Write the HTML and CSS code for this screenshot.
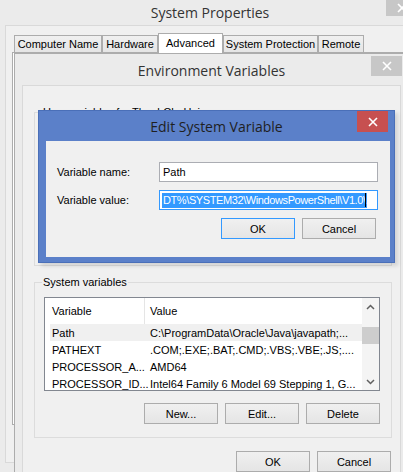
FILE: index.html
```html
<!DOCTYPE html>
<html>
<head>
<meta charset="utf-8">
<link rel="stylesheet" href="styles.css">
</head>
<body>
<div class="win sys">
  <div class="titlebar sys-tb">
    <span class="title">System Properties</span>
    <span class="closebtn sys-close"><svg width="10" height="10" viewBox="0 0 10 10"><path d="M1 1L9 9M9 1L1 9" stroke="#fff" stroke-width="1.6" fill="none"/></svg></span>
  </div>
  <div class="sys-client">
    <div class="tabs">
      <div class="tab tw1">Computer Name</div>
      <div class="tab tw2">Hardware</div>
      <div class="tab tw3 sel">Advanced</div>
      <div class="tab tw4">System Protection</div>
      <div class="tab tw5">Remote</div>
    </div>
    <div class="tabpage"></div>
  </div>
</div>

<div class="win env">
  <div class="titlebar env-tb">
    <span class="title">Environment Variables</span>
    <span class="closebtn env-close"><svg width="10" height="10" viewBox="0 0 10 10"><path d="M1 1L9 9M9 1L1 9" stroke="#fff" stroke-width="1.6" fill="none"/></svg></span>
  </div>
  <div class="env-client">
    <fieldset class="group user-group"><legend>User variables for ThanhChuHai</legend></fieldset>
    <fieldset class="group sys-group"><legend>System variables</legend>
      <div class="listview">
        <div class="lv-main">
          <div class="lv-head"><div class="c1">Variable</div><div class="c2">Value</div></div>
          <div class="lv-row hl"><div class="c1">Path</div><div class="c2">C:\ProgramData\Oracle\Java\javapath;...</div></div>
          <div class="lv-row"><div class="c1">PATHEXT</div><div class="c2">.COM;.EXE;.BAT;.CMD;.VBS;.VBE;.JS;....</div></div>
          <div class="lv-row"><div class="c1">PROCESSOR_A...</div><div class="c2">AMD64</div></div>
          <div class="lv-row"><div class="c1">PROCESSOR_ID...</div><div class="c2">Intel64 Family 6 Model 69 Stepping 1, G...</div></div>
        </div>
        <div class="vscroll">
          <div class="sb-arrow"><svg width="9" height="6" viewBox="0 0 9 6"><path d="M1 5L4.5 1.5L8 5" stroke="#606060" stroke-width="1.5" fill="none"/></svg></div>
          <div class="sb-track"><div class="sb-thumb"></div></div>
          <div class="sb-arrow"><svg width="9" height="6" viewBox="0 0 9 6"><path d="M1 1L4.5 4.5L8 1" stroke="#606060" stroke-width="1.5" fill="none"/></svg></div>
        </div>
      </div>
      <div class="btnrow lv-btns">
        <div class="btn">New...</div>
        <div class="btn">Edit...</div>
        <div class="btn">Delete</div>
      </div>
    </fieldset>
    <div class="btnrow env-btns">
      <div class="btn">OK</div>
      <div class="btn">Cancel</div>
    </div>
  </div>
</div>

<div class="win edit">
  <div class="titlebar edit-tb">
    <span class="title">Edit System Variable</span>
    <span class="closebtn edit-close"><svg width="10" height="10" viewBox="0 0 10 10"><path d="M1 1L9 9M9 1L1 9" stroke="#fff" stroke-width="1.6" fill="none"/></svg></span>
  </div>
  <div class="edit-client">
    <div class="frow">
      <div class="flabel">Variable name:</div>
      <div class="tbox">Path</div>
    </div>
    <div class="frow">
      <div class="flabel">Variable value:</div>
      <div class="tbox focus"><span class="seltext">DT%\SYSTEM32\WindowsPowerShell\V1.0\</span><span class="caret"></span></div>
    </div>
    <div class="btnrow edit-btns">
      <div class="btn default">OK</div>
      <div class="btn">Cancel</div>
    </div>
  </div>
</div>
</body>
</html>
```

FILE: styles.css
```css
* { box-sizing: border-box; }
html, body { margin: 0; padding: 0; }
body {
  width: 403px;
  height: 472px;
  overflow: hidden;
  position: relative;
  background: #ebebeb;
  font-family: "Liberation Sans", Arial, sans-serif;
  font-size: 11px;
  color: #000;
}
.win { position: absolute; }

.titlebar {
  position: relative;
  display: flex;
  justify-content: center;
  align-items: center;
  font-family: "Open Sans", "Noto Sans", sans-serif;
  font-size: 14px;
}
.title { color: #333; }
.closebtn {
  position: absolute;
  display: flex;
  align-items: center;
  justify-content: center;
  width: 31px;
  background: #c7c7c7;
}

/* System Properties */
.sys {
  left: 0;
  top: 0;
  width: 420px;
  height: 472px;
  background: #ebebeb;
}
.sys-tb { height: 25px; padding-bottom: 1px; }
.sys-close { right: 3px; top: 0; height: 16px; }
.sys-client {
  margin-left: 5px;
  height: 438px;
  background: #f0f0f0;
  border-left: 1px solid #d9d9d9;
  border-top: 1px solid #d9d9d9;
  border-bottom: 1px solid #d9d9d9;
  padding: 7px 0 0 6px;
}
.tabs {
  display: flex;
  align-items: flex-end;
  height: 19px;
  margin-left: 2px;
  position: relative;
  z-index: 1;
}
.tab {
  height: 17px;
  border: 1px solid #acacac;
  border-bottom: none;
  background: linear-gradient(#f0f0f0, #e5e5e5);
  display: flex;
  align-items: center;
  justify-content: center;
  padding-bottom: 1px;
}
.tab.sel {
  height: 20px;
  margin-bottom: -1px;
  background: #fff;
  padding-bottom: 2px;
}
.tw1 { width: 88px; }
.tw2 { width: 56px; }
.tw3 { width: 65px; }
.tw4 { width: 95px; }
.tw5 { width: 46px; }
.tabpage {
  height: 373px;
  background: #fff;
  border: 1px solid #acacac;
}

/* Environment Variables */
.env {
  left: 14px;
  top: 53px;
  width: 395px;
  height: 419px;
  background: #ebebeb;
  border: 1px solid #acacac;
  border-bottom: none;
  padding: 0 7px;
}
.env-tb { height: 31px; margin: 0 -7px; padding-top: 2px; }
.env-close { right: 6px; top: 2px; height: 20px; }
.env-client {
  background: #f0f0f0;
  border: 1px solid #d9d9d9;
  border-bottom: none;
  height: 387px;
  padding: 0 0 0 11px;
}
.group {
  margin: 0;
  border: 1px solid #dcdcdc;
  padding: 0 0 0 9px;
  width: 358px;
}
.group legend {
  padding: 0 1px;
  margin-left: -2px;
  line-height: 14px;
}
.user-group { margin-top: 19px; height: 161px; }
.sys-group { margin-top: 9px; height: 163px; padding-top: 8px; }

.listview {
  width: 336px;
  height: 94px;
  border: 1px solid #828790;
  background: #fff;
  display: flex;
}
.lv-main { width: 317px; overflow: hidden; }
.lv-head { display: flex; height: 26px; align-items: stretch; }
.lv-head .c1 {
  width: 100px;
  padding-left: 7px;
  border-right: 1px solid #e5e5e5;
  display: flex;
  align-items: center;
}
.lv-head .c2 {
  padding-left: 5px;
  display: flex;
  align-items: center;
}
.lv-row {
  display: flex;
  height: 17px;
  align-items: center;
  margin-left: 5px;
  white-space: nowrap;
}
.lv-row.hl { background: #f0f0f0; }
.lv-row .c1 { width: 95px; padding-left: 2px; }
.lv-row .c2 { padding-left: 5px; }

.vscroll {
  width: 17px;
  display: flex;
  flex-direction: column;
  background: #f4f4f4;
}
.sb-arrow {
  height: 17px;
  display: flex;
  align-items: center;
  justify-content: center;
}
.sb-track { flex: 1; }
.sb-thumb {
  margin: 12px 0 0 0;
  height: 17px;
  background: #cdcdcd;
}

.btnrow { display: flex; justify-content: flex-end; gap: 7px; }
.btn {
  width: 74px;
  height: 21px;
  border: 1px solid #acacac;
  background: linear-gradient(#f0f0f0, #e5e5e5);
  display: flex;
  align-items: center;
  justify-content: center;
}
.btn.default { border-color: #3399ff; }
.lv-btns { width: 336px; margin-top: 12px; }
.env-btns { width: 357px; margin-top: 13px; }

/* Edit System Variable */
.edit {
  left: 38px;
  top: 110px;
  width: 357px;
  height: 153px;
  background: #5b80c9;
  border: 1px solid #4a6fb8;
  padding: 0 4px 5px 7px;
  box-shadow: 3px 3px 4px rgba(0, 0, 0, 0.12);
}
.edit-tb { height: 30px; margin: 0 -4px 0 -7px; padding-top: 1px; }
.edit-tb .title { color: #1f1f1f; }
.edit-close { right: 6px; top: 0; height: 21px; background: #c75050; }
.edit-client {
  background: #f0f0f0;
  height: 116px;
  padding: 21px 0 0 11px;
}
.frow { display: flex; align-items: center; height: 20px; margin-bottom: 8px; }
.flabel { width: 102px; }
.tbox {
  width: 219px;
  height: 20px;
  border: 1px solid #abadb3;
  background: #fff;
  padding-left: 3px;
  display: flex;
  align-items: center;
  overflow: hidden;
  white-space: nowrap;
}
.tbox.focus { border-color: #3399ff; padding-left: 2px; }
.seltext {
  background: #3399ff;
  color: #fff;
  line-height: 15px;
  padding: 0 1px;
  letter-spacing: -0.4px;
}
.caret { width: 1px; height: 14px; background: #000; flex: none; margin-left: -2px; }
.edit-btns { width: 319px; margin-top: 5px; }
```
